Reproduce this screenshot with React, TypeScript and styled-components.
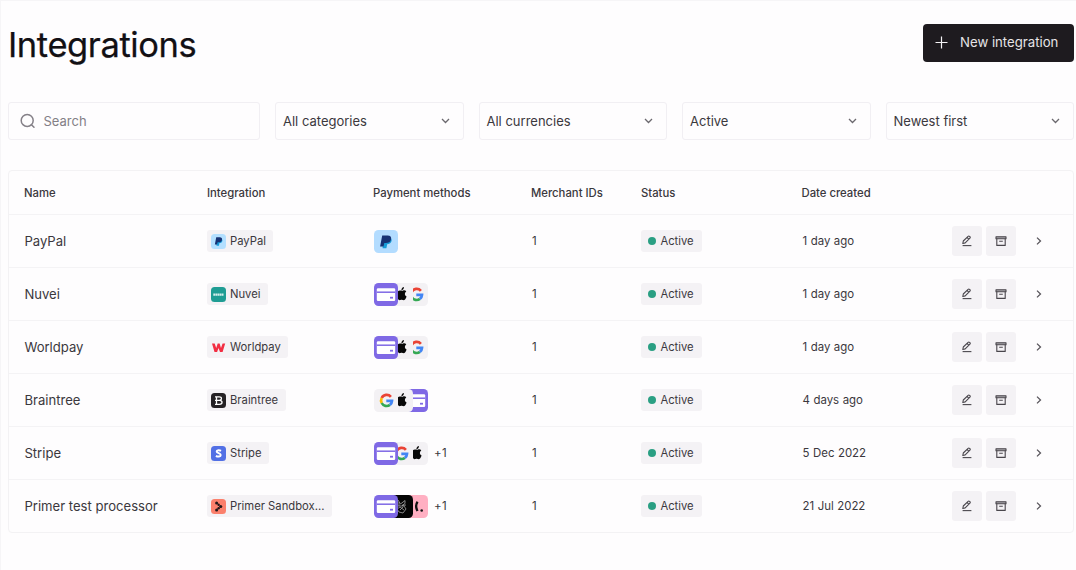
import React from "react";
import styled, { createGlobalStyle } from "styled-components";

const GlobalStyle = createGlobalStyle`
  *, *::before, *::after { box-sizing: border-box; }
  body { margin: 0; background: #fefdfe; }
`;

const Page = styled.main`
  height: 570px;
  padding: 22px 2px 0 7px;
  border-top: 1px solid #f6f5f7;
  border-left: 1px solid #f6f5f7;
  overflow: hidden;
  font-family: Inter, "Liberation Sans", sans-serif;
  color: #3b383d;
`;

const Header = styled.header`
  display: flex;
  justify-content: space-between;
  align-items: flex-start;
  height: 79px;
`;

const Title = styled.h1`
  margin: 1px 0 0;
  font-size: 34.5px;
  line-height: 42px;
  font-weight: 400;
  letter-spacing: -0.4px;
  color: #121014;
  -webkit-text-stroke: 0.25px #121014;
`;

const PrimaryButton = styled.button`
  display: flex;
  align-items: center;
  gap: 12px;
  width: 151px;
  height: 38px;
  margin: 1px 0 0;
  padding: 0 0 2px 12px;
  border: 0;
  border-radius: 4px;
  background: #1e1b1f;
  color: #e6e4e7;
  font: 400 13.2px Inter, sans-serif;
  white-space: nowrap;
`;

const Filters = styled.div`
  display: grid;
  grid-template-columns: 252px repeat(4, 1fr);
  column-gap: 15px;
  margin-bottom: 30px;
`;

const Field = styled.div`
  display: flex;
  align-items: center;
  height: 38px;
  border: 1px solid #f1eff3;
  border-radius: 3px;
  font-size: 13px;
`;

const SearchField = styled(Field)`
  gap: 7.5px;
  padding-left: 11px;
  color: #838086;
`;

const SelectField = styled(Field)`
  justify-content: space-between;
  padding: 0 12px 0 7px;
`;

const Table = styled.section`
  border: 1px solid #f3f2f4;
  border-radius: 4px;
`;

const Row = styled.div<{ $head?: boolean }>`
  display: grid;
  grid-template-columns: 183px 166px 158px 110px 160.5px 150.5px 1fr;
  align-items: center;
  height: ${(p) => (p.$head ? 43 : 53)}px;
  padding: ${(p) => (p.$head ? "1px 0 0 15px" : "0 0 0 15.4px")};
  font-size: ${(p) => (p.$head ? 11.3 : 11.45)}px;
  font-weight: ${(p) => (p.$head ? 500 : 400)};
  & + & { border-top: 1px solid #f4f3f5; }
`;

const Name = styled.span`
  font-size: 13.1px;
`;

const Indented = styled.span`
  padding-left: 0.6px;
  word-spacing: 0.3px;
`;

const Tag = styled.span<{ $status?: boolean }>`
  display: inline-flex;
  align-items: center;
  gap: 4px;
  height: 22px;
  padding: ${(p) => (p.$status ? "0 8px 0 7px" : "0 7.5px 0 3.6px")};
  border-radius: 3px;
  background: #f4f2f5;
  font-size: 11.25px;
  white-space: nowrap;
`;

const Dot = styled.i`
  width: 8px;
  height: 8px;
  border-radius: 50%;
  background: #2a9f83;
`;

const Methods = styled.div`
  display: flex;
  align-items: center;
  padding-left: 0.6px;
`;

const Method = styled.span<{ $order: number }>`
  display: flex;
  z-index: ${(p) => 4 - p.$order};
  margin-left: ${(p) => (p.$order ? -9 : 0)}px;
`;

const More = styled.span`
  margin-left: 6px;
  letter-spacing: 0.5px;
`;

const Actions = styled.div`
  display: flex;
  align-items: center;
  gap: 4px;
  margin-left: -0.4px;
`;

const IconButton = styled.button`
  display: flex;
  align-items: center;
  justify-content: center;
  width: 30px;
  height: 30px;
  padding: 0;
  border: 0;
  border-radius: 3px;
  background: #f4f2f5;
`;

const Next = styled.span`
  display: flex;
  margin-left: 15px;
`;

const Plus = () => (
  <svg width="13" height="13" viewBox="0 0 13 13" stroke="#f4f2f5" strokeWidth="1.2">
    <path d="M6.5 .5v12M.5 6.5h12" />
  </svg>
);

const Search = () => (
  <svg width="16" height="16" viewBox="0 0 16 16" fill="none" stroke="#858188" strokeWidth="1.5" strokeLinecap="round">
    <circle cx="7.2" cy="7.4" r="6" />
    <path d="m11.7 11.9 2.3 2.4" />
  </svg>
);

const ChevronDown = () => (
  <svg width="11" height="8" viewBox="0 0 11 8" fill="none" stroke="#6b686e" strokeWidth="1.3">
    <path d="m2 2 3.5 3.5L9 2" />
  </svg>
);

const ChevronRight = () => (
  <svg width="8" height="12" viewBox="0 0 8 12" fill="none" stroke="#58555b" strokeWidth="1.3">
    <path d="m2 2.6 3.5 3.4L2 9.4" />
  </svg>
);

const Pencil = () => (
  <svg width="12" height="12" viewBox="0 0 12 12" fill="none" stroke="#49464c" strokeWidth="1.1" strokeLinejoin="round">
    <path d="M1.8 8.5 2.3 6 7.1 1.3a1 1 0 0 1 1.4 0l.4.4a1 1 0 0 1 0 1.4L4.2 7.9zM6 2.4l1.8 1.8" />
    <path d="M1.6 10.6h8.8" />
  </svg>
);

const Archive = () => (
  <svg width="12" height="12" viewBox="0 0 12 12" fill="none" stroke="#49464c" strokeWidth="1.1" strokeLinejoin="round">
    <path fill="#a5a3a7" d="M1 1.7h10v2H1z" />
    <path d="M1.8 3.8v6.6h8.4V3.8M4.2 6.2h3.6" />
  </svg>
);

type Brand = "paypal" | "nuvei" | "worldpay" | "braintree" | "stripe" | "primer";

const brandColors: Record<Brand, string> = {
  paypal: "#b3dfff",
  nuvei: "#1f9d94",
  worldpay: "#f4f2f5",
  braintree: "#242124",
  stripe: "#5270e5",
  primer: "#fb806c",
};

const PayPalMark = () => (
  <g>
    <path fill="#179bd7" d="M9 7.5h7.2c1.6 1 1.8 2.6 1.1 4.3-.7 1.7-2.2 2.4-4.1 2.4l-.8 4.1H8.6z" />
    <path fill="#173274" d="M8.2 5.4h5.4c2.8 0 4 1.5 3.4 4-.6 2.6-2.4 3.5-5.2 3.5h-1.5l-.8 3.7H6.1z" />
  </g>
);

const BrandIcon = ({ brand }: { brand: Brand }) => (
  <svg width="15" height="15" viewBox="0 0 15 15">
    <rect width="15" height="15" rx="3.5" fill={brandColors[brand]} />
    {brand === "paypal" && <g transform="translate(-.1 -.2) scale(.65)"><PayPalMark /></g>}
    {brand === "nuvei" && (
      <path d="M2.3 7.6h10.4" stroke="#d4eeeb" strokeWidth="2.2" strokeDasharray="1.8 .3" />
    )}
    {brand === "worldpay" && (
      <path fill="#f22e43" d="M1 3.4h2.7l1.5 4.7 1.5-4.7h1.9L10 8.1l1.6-4.7h2.6L11.6 12H9L7.5 7.9 6.1 12H3.5z" />
    )}
    {brand === "braintree" && (
      <path d="M4 3.8h4.2c3 0 3 3.5 0 3.5H5.6h3c3.3 0 3.3 4.1-.2 4.1H4M5.5 3.8v7.6M4 7.3h1.5" fill="none" stroke="#fff" strokeWidth="1.3" />
    )}
    {brand === "stripe" && (
      <path d="M10 4.8C8.7 4 5.7 3.9 5.7 5.5c0 2 4 1.2 4 3.4 0 2-3.1 1.9-4.8.9" fill="none" stroke="#fff" strokeWidth="2" />
    )}
    {brand === "primer" && (
      <g fill="#211719">
        <circle cx="5.6" cy="4" r="1.5" />
        <circle cx="7.6" cy="5.8" r="1.2" />
        <circle cx="9.7" cy="7.5" r="1.6" />
        <circle cx="7.6" cy="9.2" r="1.2" />
        <circle cx="5.6" cy="10.9" r="1.5" />
      </g>
    )}
  </svg>
);

type MethodKind = "paypal" | "card" | "apple" | "google" | "dark" | "klarna";

const methodColors: Record<MethodKind, string> = {
  paypal: "#b3dcff",
  card: "#7f69e5",
  apple: "#f3f1f4",
  google: "#f3f1f4",
  dark: "#050505",
  klarna: "#ffafc2",
};

const MethodIcon = ({ kind }: { kind: MethodKind }) => (
  <svg width="24" height="23" viewBox="0 0 24 23">
    <rect width="24" height="23" rx="4.5" fill={methodColors[kind]} />
    {kind === "paypal" && <PayPalMark />}
    {kind === "card" && (
      <g>
        <rect x="2.8" y="5.2" width="18.4" height="12.8" rx="1.2" fill="#fff" />
        <path d="M2.8 9.2h18.4" stroke="#7f69e5" strokeWidth="1.5" />
        <path d="M16 14.7h3" stroke="#7f69e5" strokeWidth="1.8" />
      </g>
    )}
    {kind === "apple" && (
      <g fill="#080808" transform="translate(.5 0)">
        <path d="M13.2 7.7c1.5-.7 2.8-.4 3.6.7-2 1.4-1.8 4 .3 5-.7 2-1.8 3.8-3.1 3.8-.7 0-1-.4-1.9-.4s-1.3.4-1.9.4c-1.5 0-3-3-3-5.4 0-3 1.8-4.4 3.6-4.2.9 0 1.5.4 2.4.1z" />
        <path d="M11.9 7.2c-.1-1.8 1.2-3 2.5-3.2.2 1.8-1.1 3.1-2.5 3.2z" />
      </g>
    )}
    {kind === "google" && (
      <g fill="none" strokeWidth="2.7" transform="translate(.3 0)">
        <path stroke="#ea4335" d="M16.6 7.8A5.5 5.5 0 0 0 7.4 9" />
        <path stroke="#fbbc05" d="M7.4 9a5.5 5.5 0 0 0 0 5" />
        <path stroke="#34a853" d="M7.4 14a5.5 5.5 0 0 0 8.2 1.9" />
        <path stroke="#4285f4" d="M15.6 15.9a5.5 5.5 0 0 0 2.1-4H12" />
      </g>
    )}
    {kind === "dark" && (
      <path d="m9 5 2.5 4L16 5.5v3l-3 2 4-.5M9 11h6l2 3-3 4-4-1-2-3 3-2 4 3M11 15l3-3M10 7v4" fill="none" stroke="#a6a6a6" strokeWidth=".8" />
    )}
    {kind === "klarna" && (
      <g fill="#111">
        <path d="M13.6 6.8c-2 2.6-2.2 5.2-.1 9.3" fill="none" stroke="#111" strokeWidth="2.3" />
        <circle cx="17.7" cy="15.5" r="1.3" />
      </g>
    )}
  </svg>
);

interface Integration {
  name: string;
  brand: Brand;
  label: string;
  methods: MethodKind[];
  more?: string;
  date: string;
}

const integrations: Integration[] = [
  { name: "PayPal", brand: "paypal", label: "PayPal", methods: ["paypal"], date: "1 day ago" },
  { name: "Nuvei", brand: "nuvei", label: "Nuvei", methods: ["card", "apple", "google"], date: "1 day ago" },
  { name: "Worldpay", brand: "worldpay", label: "Worldpay", methods: ["card", "apple", "google"], date: "1 day ago" },
  { name: "Braintree", brand: "braintree", label: "Braintree", methods: ["google", "apple", "card"], date: "4 days ago" },
  { name: "Stripe", brand: "stripe", label: "Stripe", methods: ["card", "google", "apple"], more: "+1", date: "5 Dec 2022" },
  { name: "Primer test processor", brand: "primer", label: "Primer Sandbox...", methods: ["card", "dark", "klarna"], more: "+1", date: "21 Jul 2022" },
];

const filters = ["All categories", "All currencies", "Active", "Newest first"];
const columns = ["Name", "Integration", "Payment methods", "Merchant IDs", "Status", "Date created"];

export default function App() {
  return (
    <Page>
      <GlobalStyle />
      <Header>
        <Title>Integrations</Title>
        <PrimaryButton><Plus />New integration</PrimaryButton>
      </Header>
      <Filters>
        <SearchField><Search />Search</SearchField>
        {filters.map((f) => <SelectField key={f}>{f}<ChevronDown /></SelectField>)}
      </Filters>
      <Table>
        <Row $head>{columns.map((c) => <span key={c}>{c}</span>)}</Row>
        {integrations.map((item) => (
          <Row key={item.name}>
            <Name>{item.name}</Name>
            <div><Tag><BrandIcon brand={item.brand} />{item.label}</Tag></div>
            <Methods>
              {item.methods.map((m, i) => <Method key={m} $order={i}><MethodIcon kind={m} /></Method>)}
              {item.more && <More>{item.more}</More>}
            </Methods>
            <Indented>1</Indented>
            <div><Tag $status><Dot />Active</Tag></div>
            <Indented>{item.date}</Indented>
            <Actions>
              <IconButton aria-label="Edit"><Pencil /></IconButton>
              <IconButton aria-label="Archive"><Archive /></IconButton>
              <Next><ChevronRight /></Next>
            </Actions>
          </Row>
        ))}
      </Table>
    </Page>
  );
}
